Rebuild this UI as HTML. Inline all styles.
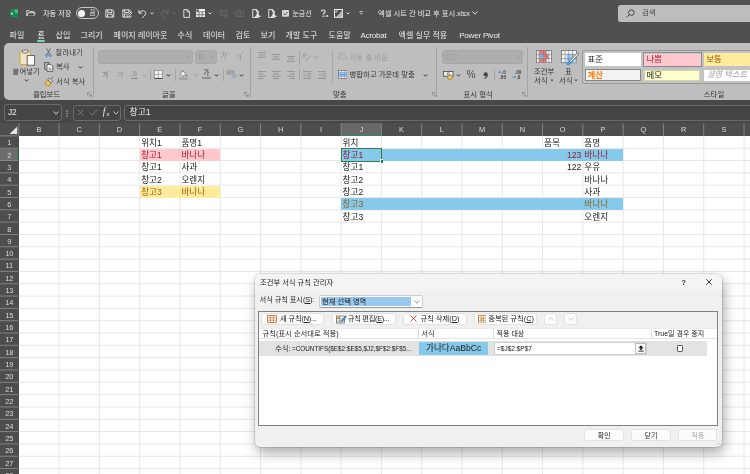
<!DOCTYPE html>
<html lang="ko">
<head>
<meta charset="utf-8">
<title>엑셀 시트 간 비교 후 표시.xlsx</title>
<style>
*{box-sizing:border-box;margin:0;padding:0}
html,body{width:750px;height:474px;overflow:hidden;background:#fff}
body{position:relative;font-family:"Liberation Sans","Noto Sans CJK KR",sans-serif;font-size:7.5px;color:#222;line-height:1}
#wrap{position:absolute;left:0;top:0;width:750px;height:474px;overflow:hidden;will-change:transform}
.abs,.t{position:absolute;white-space:nowrap}
#top{position:absolute;left:0;top:0;width:750px;height:124px;background:#505050}
#ribbon{position:absolute;left:4px;top:43.2px;width:760px;height:56.7px;background:#bebebe;border-radius:5px}
#fbar{position:absolute;left:0;top:100px;width:750px;height:24px;background:#474747}
.tt{color:#ececec;font-size:7.5px}
.tab{color:#ececec;font-size:8px;top:31.7px;margin-left:0.6px}
.rt{color:#363636;font-size:7.4px}
.rd{color:#9c9c9c;font-size:7.4px}
.grp{color:#333;font-size:7.4px;top:90.6px}
.vsep{position:absolute;width:1px;background:#a4a4a4;top:50px;height:44px}
.box{position:absolute;border:1px solid #6a6a6a;border-radius:3px;background:#444}
/* grid */
#grid{position:absolute;left:0;top:123.4px;width:750px;height:351px;background:#fff}
#colh{position:absolute;left:0;top:0;width:750px;height:12.9px;background:#4d4d4d}
#rowh{position:absolute;left:0;top:12.9px;width:19px;height:339px;background:#4d4d4d}
.ch{position:absolute;top:3px;color:#dcdcdc;font-size:7.4px;width:40.25px;text-align:center}
.rh{position:absolute;left:0;width:18.6px;text-align:center;color:#dcdcdc;font-size:7.4px}
.c{position:absolute;font-size:8.6px;color:#1a1a1a;white-space:nowrap}
.fill{position:absolute}
/* dialog */
#dlg{position:absolute;left:255.2px;top:274.0px;width:466.8px;height:172.6px;background:#f0f0f0;border-radius:5px;box-shadow:0 0 0 0.6px rgba(0,0,0,.2),2px 6px 13px rgba(0,0,0,.34)}
.d{position:absolute;display:block;white-space:nowrap;font-size:7.3px;color:#1a1a1a}
.btn{position:absolute;background:#fcfcfc;border:0.8px solid #e2e2e2;border-radius:2.5px;height:12.5px}
</style>
</head>
<body>
<div id="wrap">
<div id="top">
<!-- title bar -->
<svg class="abs" style="left:9px;top:8.8px" width="9.4" height="8.8" viewBox="0 0 12 11.2"><rect x="3" y="0.6" width="8.6" height="10" rx="1" fill="#1f9a58"/><rect x="7.2" y="0.6" width="4.4" height="5" fill="#3bc07c"/><rect x="7.2" y="5.6" width="4.4" height="5" rx="0.8" fill="#168a4c"/><rect x="0.4" y="2.6" width="6.8" height="6.4" rx="0.8" fill="#0f7a40"/><path d="M2.3 4.2 L5.3 7.6 M5.3 4.2 L2.3 7.6" stroke="#fff" stroke-width="1" fill="none"/></svg>
<svg class="abs" style="left:26.4px;top:9.7px" width="10" height="6.8" viewBox="0 0 11 7.6"><path d="M0.8 7 V0.7 H3.6 L4.6 1.8 H8.4 V3 M0.8 7 L2.6 3 H10.2 L8.4 7 Z" fill="none" stroke="#f0f0f0" stroke-width="0.95" stroke-linejoin="round"/></svg>
<span class="t tt" style="left:43px;top:9.5px;font-size:7.2px">자동 저장</span>
<div class="abs" style="left:76.3px;top:7.3px;width:23.2px;height:11.8px;border:0.8px solid #c4c4c4;border-radius:6px"></div>
<div class="abs" style="left:78.2px;top:9.6px;width:7.2px;height:7.2px;border-radius:50%;background:#f8f8f8"></div>
<span class="t tt" style="left:89.6px;top:9.9px;font-size:6.6px">끔</span>
<svg class="abs" style="left:105.4px;top:8.8px" width="9.6" height="9" viewBox="0 0 12 11"><path d="M1 1 H9.3 L11 2.7 V10 H1 Z M3 1 V4.2 H8.6 V1 M3 10 V6.3 H9 V10" fill="none" stroke="#f2f2f2" stroke-width="1.1"/></svg>
<svg class="abs" style="left:121.6px;top:8.8px" width="10.4" height="9" viewBox="0 0 13 11"><path d="M1 1 H9.3 L11 2.7 V5 M11 8.4 V10 H1 V1 M3 1 V4.2 H8.6 V1 M3 10 V6.3 H6.5" fill="none" stroke="#f2f2f2" stroke-width="1.1"/><path d="M6.5 9.5 L7 7.6 L10.8 3.8 L12.2 5.2 L8.4 9 Z" fill="none" stroke="#f2f2f2" stroke-width="0.9"/></svg>
<svg class="abs" style="left:138.4px;top:8.6px" width="9" height="9.6" viewBox="0 0 11 11.6"><path d="M1.2 1.2 V5 H5 M1.6 4.8 C3 2.2 6.2 1.4 8.2 2.8 C10.4 4.6 9.6 7.8 4.8 11" fill="none" stroke="#f2f2f2" stroke-width="1.1"/></svg>
<svg class="abs" style="left:150.2px;top:11.6px" width="4" height="3" viewBox="0 0 4 3"><path d="M0.5 0.5 L2 2 L3.5 0.5" fill="none" stroke="#e0e0e0" stroke-width="0.95"/></svg>
<svg class="abs" style="left:160.4px;top:8.6px" width="9" height="9.6" viewBox="0 0 11 11.6"><path d="M9.8 1.2 V5 H6 M9.4 4.8 C8 2.2 4.8 1.4 2.8 2.8 C0.6 4.6 1.4 7.8 6.2 11" fill="none" stroke="#6e6e6e" stroke-width="1.1"/></svg>
<svg class="abs" style="left:172px;top:11.6px" width="4" height="3" viewBox="0 0 4 3"><path d="M0.5 0.5 L2 2 L3.5 0.5" fill="none" stroke="#6e6e6e" stroke-width="0.95"/></svg>
<svg class="abs" style="left:182.8px;top:8.8px" width="7.4" height="9" viewBox="0 0 9 11"><path d="M1 0.8 H5.4 L8 3.4 V10.2 H1 Z M5.2 0.8 V3.6 H8" fill="none" stroke="#f2f2f2" stroke-width="1.1"/></svg>
<svg class="abs" style="left:195.6px;top:8.9px" width="9.4" height="8.6" viewBox="0 0 9.4 8.6"><rect x="0" y="0" width="9.4" height="8.6" rx="0.6" fill="#f2f2f2"/><path d="M0 2.8 H9.4 M3 2.8 V8.6 M0 5.7 H9.4 M6.2 2.8 V8.6" stroke="#505050" stroke-width="0.7"/><rect x="0.4" y="0.4" width="2.4" height="2" fill="#505050"/></svg>
<svg class="abs" style="left:208.4px;top:11.6px" width="4" height="3" viewBox="0 0 4 3"><path d="M0.5 0.5 L2 2 L3.5 0.5" fill="none" stroke="#e0e0e0" stroke-width="0.95"/></svg>
<svg class="abs" style="left:219.4px;top:8.8px" width="9" height="9" viewBox="0 0 11 11"><path d="M2.6 0.5 V8.4 H10.5 M0.5 2.6 H8.4 V10.5 M8.4 2.6 L10.4 0.6" fill="none" stroke="#6e6e6e" stroke-width="1"/></svg>
<svg class="abs" style="left:235px;top:9.8px" width="9.2" height="7.2" viewBox="0 0 11 8.6"><path d="M0.6 1.8 H3 L3.8 0.6 H7.2 L8 1.8 H10.4 V8 H0.6 Z" fill="none" stroke="#6e6e6e" stroke-width="1"/><circle cx="5.5" cy="4.8" r="1.9" fill="none" stroke="#6e6e6e" stroke-width="1"/></svg>
<svg class="abs" style="left:251.6px;top:8.8px" width="9.4" height="9" viewBox="0 0 10.4 10"><path d="M0.8 0.6 H5 L7 2.6 V9.4 H0.8 Z M4.8 0.6 V2.8 H7" fill="none" stroke="#f2f2f2" stroke-width="1"/><path d="M3.4 9.2 C5.2 7.4 6 5.4 5.6 3.8 C6 6.2 7.4 7.8 9.8 8.2 C7.4 8 5 8.4 3.4 9.2 Z" fill="#f2f2f2" stroke="#f2f2f2" stroke-width="0.7"/></svg>
<svg class="abs" style="left:267.8px;top:8.8px" width="9.4" height="9" viewBox="0 0 10.4 10"><path d="M0.8 0.6 H5 L7 2.6 V9.4 H0.8 Z M4.8 0.6 V2.8 H7" fill="none" stroke="#f2f2f2" stroke-width="1"/><path d="M3.4 9.2 C5.2 7.4 6 5.4 5.6 3.8 C6 6.2 7.4 7.8 9.8 8.2 C7.4 8 5 8.4 3.4 9.2 Z" fill="#f2f2f2" stroke="#f2f2f2" stroke-width="0.7"/></svg>
<svg class="abs" style="left:282.2px;top:10px" width="7" height="6.8" viewBox="0 0 7 6.8"><rect x="0" y="0" width="7" height="6.8" rx="1" fill="#d6d6d6"/><path d="M1.5 3.5 L2.9 4.9 L5.5 1.9" fill="none" stroke="#4a4a4a" stroke-width="1"/></svg>
<span class="t tt" style="left:292.4px;top:9.9px;font-size:7px">눈금선</span>
<svg class="abs" style="left:320.4px;top:8.8px" width="8.6" height="8.6" viewBox="0 0 10 10"><path d="M1.4 3 C1.4 0.4 6 0.4 6 3 C6 4.8 3.7 4.6 3.7 6.4" fill="none" stroke="#f2f2f2" stroke-width="1.2"/><circle cx="3.7" cy="8.4" r="0.85" fill="#f2f2f2"/><path d="M5.4 8.2 H9.4 M8 6.8 L9.4 8.2 L8 9.6" fill="none" stroke="#f2f2f2" stroke-width="0.9"/></svg>
<svg class="abs" style="left:334px;top:8.9px" width="9" height="8.8" viewBox="0 0 9 8.8"><rect x="0.5" y="0.5" width="8" height="7.8" fill="none" stroke="#f2f2f2" stroke-width="1"/><path d="M0.5 3 H3 V0.5" stroke="#f2f2f2" stroke-width="0.7" fill="none"/><path d="M2.2 8.2 L8.4 1.6 V8.2 Z" fill="#dcdcdc"/><path d="M3.6 8.2 L8.4 3.4 M5.4 8.2 L8.4 5.2" stroke="#505050" stroke-width="0.5"/></svg>
<svg class="abs" style="left:346.4px;top:11.6px" width="4" height="3" viewBox="0 0 4 3"><path d="M0.5 0.5 L2 2 L3.5 0.5" fill="none" stroke="#e0e0e0" stroke-width="0.95"/></svg>
<svg class="abs" style="left:358.8px;top:11.2px" width="4.6" height="4" viewBox="0 0 4.6 4"><path d="M0.4 0.5 H4.2 M0.9 1.8 L2.3 3.2 L3.7 1.8" fill="none" stroke="#dcdcdc" stroke-width="0.8"/></svg>
<span class="t tt" style="left:378px;top:9.5px;font-size:7.3px">엑셀 시트 간 비교 후 표시.xlsx</span>
<svg class="abs" style="left:471.5px;top:11.3px" width="6" height="4" viewBox="0 0 6 4"><path d="M0.5 0.5 L3 3.2 L5.5 0.5" fill="none" stroke="#eee" stroke-width="0.9"/></svg>
<div class="abs" style="left:618px;top:5px;width:140px;height:16.5px;background:#bdbdbd;border-radius:2.5px"></div>
<svg class="abs" style="left:625.5px;top:8.5px" width="9" height="9" viewBox="0 0 9 9"><circle cx="5.4" cy="3.6" r="2.8" fill="none" stroke="#3a3a3a" stroke-width="0.9"/><path d="M3.4 5.6 L0.6 8.4" stroke="#3a3a3a" stroke-width="0.9"/></svg>
<span class="t" style="left:642px;top:9.3px;font-size:7.4px;color:#444">검색</span>
<!-- tabs -->
<span class="t tab" style="left:9px">파일</span>
<span class="t tab" style="left:36.8px">홈</span>
<div class="abs" style="left:36.5px;top:40.3px;width:8px;height:1.4px;background:#7fd4a5;border-radius:1px"></div>
<span class="t tab" style="left:55px">삽입</span>
<span class="t tab" style="left:80px">그리기</span>
<span class="t tab" style="left:113px">페이지 레이아웃</span>
<span class="t tab" style="left:177px">수식</span>
<span class="t tab" style="left:202.5px">데이터</span>
<span class="t tab" style="left:235px">검토</span>
<span class="t tab" style="left:260px">보기</span>
<span class="t tab" style="left:285px">개발 도구</span>
<span class="t tab" style="left:328px">도움말</span>
<span class="t tab" style="left:360px;letter-spacing:-0.25px">Acrobat</span>
<span class="t tab" style="left:398px">엑셀 실무 적용</span>
<span class="t tab" style="left:458.6px;letter-spacing:-0.2px">Power Pivot</span>
</div>
<div id="ribbon"></div>
<!-- clipboard group -->
<svg class="abs" style="left:18.5px;top:48.5px" width="17" height="17" viewBox="0 0 17 17"><rect x="1" y="2.6" width="10.5" height="13" rx="1" fill="#efe3c8" stroke="#dfa02c" stroke-width="1"/><rect x="3.6" y="1" width="5.4" height="3" rx="0.8" fill="#e8e8e8" stroke="#555" stroke-width="0.8"/><rect x="8.2" y="6.6" width="7.4" height="9.6" fill="#fbfbfb" stroke="#555" stroke-width="0.9"/></svg>
<span class="t rt" style="left:12.6px;top:68.2px">붙여넣기</span>
<svg class="abs" style="left:24.2px;top:79px" width="5" height="3" viewBox="0 0 5 3"><path d="M0.9 0.5 L2.5 2.2 L4.1 0.5" fill="none" stroke="#333" stroke-width="1"/></svg>
<svg class="abs" style="left:45px;top:48.2px" width="7" height="9" viewBox="0 0 7 9"><path d="M1.6 0.4 L4.6 6 M5.4 0.4 L2.4 6" stroke="#555" stroke-width="0.8" fill="none"/><circle cx="1.8" cy="7.2" r="1.2" fill="none" stroke="#2a7ad1" stroke-width="0.8"/><circle cx="5.2" cy="7.2" r="1.2" fill="none" stroke="#2a7ad1" stroke-width="0.8"/></svg>
<span class="t rt" style="left:55.6px;top:48.6px">잘라내기</span>
<svg class="abs" style="left:44px;top:62.3px" width="10" height="10" viewBox="0 0 10 10"><path d="M2.4 7.4 H0.6 V0.6 H5 V2.2" fill="none" stroke="#444" stroke-width="0.8"/><path d="M3 2.4 H6.8 L8.8 4.4 V9.4 H3 Z" fill="#f4f4f4" stroke="#444" stroke-width="0.8"/><path d="M4.6 6.2 H7.2 M4.6 7.8 H7.2" stroke="#444" stroke-width="0.6"/></svg>
<span class="t rt" style="left:56px;top:63.2px">복사</span>
<svg class="abs" style="left:78px;top:66px" width="5" height="3" viewBox="0 0 5 3"><path d="M0.9 0.5 L2.5 2.2 L4.1 0.5" fill="none" stroke="#333" stroke-width="1"/></svg>
<svg class="abs" style="left:44px;top:76.5px" width="10" height="10" viewBox="0 0 10 10"><path d="M5.2 1.2 L8.8 4.2 L7.4 5.6 L3.8 2.8 Z" fill="#f4f4f4" stroke="#444" stroke-width="0.8"/><path d="M3.6 3.2 L7 6 L4.6 9.2 L0.8 7 Z" fill="#f0c85a" stroke="#a9780f" stroke-width="0.7"/><path d="M7.6 1 L9 0.2" stroke="#444" stroke-width="0.8"/></svg>
<span class="t rt" style="left:56px;top:77.6px">서식 복사</span>
<span class="t grp" style="left:33px">클립보드</span>
<svg class="abs" style="left:87.3px;top:92.2px" width="4.6" height="4.6" viewBox="0 0 4.6 4.6"><path d="M0.3 3.4 V0.3 H3.4 M1.6 1.6 L4.2 4.2 M4.2 2.4 V4.2 H2.4" fill="none" stroke="#6a6a6a" stroke-width="0.6"/></svg>
<div class="vsep" style="left:92.9px;top:46.5px;height:50px"></div>
<!-- font group -->
<div class="abs" style="left:98.3px;top:50px;width:95px;height:13.5px;background:#aeaeae;border:1px solid #a7a7a7;border-radius:3px"></div>
<svg class="abs" style="left:186.2px;top:55.5px" width="5" height="3" viewBox="0 0 5 3"><path d="M0.9 0.5 L2.5 2.2 L4.1 0.5" fill="none" stroke="#939393" stroke-width="0.9"/></svg>
<div class="abs" style="left:195px;top:50px;width:21.5px;height:13.5px;background:#aeaeae;border:1px solid #a7a7a7;border-radius:3px"></div>
<span class="t rd" style="left:197.4px;top:53.2px;font-size:7.8px;color:#969696;letter-spacing:-0.4px">11</span>
<svg class="abs" style="left:210px;top:55.5px" width="5" height="3" viewBox="0 0 5 3"><path d="M0.9 0.5 L2.5 2.2 L4.1 0.5" fill="none" stroke="#939393" stroke-width="0.9"/></svg>
<span class="t rd" style="left:220.6px;top:53.4px;font-size:6.8px;color:#8a8a8a">가</span><span class="t rd" style="left:226.8px;top:52px;font-size:4.4px;color:#8a8a8a">^</span>
<span class="t rd" style="left:236px;top:54px;font-size:6px;color:#8a8a8a">가</span><span class="t rd" style="left:241.6px;top:52px;font-size:5px;color:#8a8a8a">ˇ</span>
<span class="t rd" style="left:102.5px;top:71.6px;font-size:6.4px;font-weight:bold;color:#878787">가</span>
<span class="t rd" style="left:117px;top:71.6px;font-size:6.4px;font-style:italic;color:#878787">가</span>
<span class="t rd" style="left:131.5px;top:71.6px;font-size:6.4px;text-decoration:underline;color:#878787">가</span>
<svg class="abs" style="left:142px;top:74px" width="5" height="3" viewBox="0 0 5 3"><path d="M0.9 0.5 L2.5 2.2 L4.1 0.5" fill="none" stroke="#939393" stroke-width="0.9"/></svg>
<div class="vsep" style="left:150px;top:68.5px;height:12.5px"></div>
<svg class="abs" style="left:154px;top:70.4px" width="9" height="9" viewBox="0 0 9 9"><rect x="0.4" y="0.4" width="8" height="8" fill="#f4f4f4" stroke="#777" stroke-width="0.6"/><path d="M4.4 0.4 V8.4 M0.4 4.4 H8.4" stroke="#888" stroke-width="0.6"/><path d="M0.2 8.4 H8.6" stroke="#333" stroke-width="0.9"/></svg>
<svg class="abs" style="left:166.2px;top:74px" width="5" height="3" viewBox="0 0 5 3"><path d="M0.9 0.5 L2.5 2.2 L4.1 0.5" fill="none" stroke="#333" stroke-width="1"/></svg>
<div class="vsep" style="left:174.5px;top:68.5px;height:12.5px"></div>
<svg class="abs" style="left:179.3px;top:69.6px" width="9" height="10" viewBox="0 0 9 10"><path d="M3.8 0.8 L6.8 3.8 L3.8 6.6 L0.9 3.7 Z" fill="#efefef" stroke="#666" stroke-width="0.7"/><path d="M7.6 4.6 C7 5.6 6.9 6.3 7.6 6.5 C8.3 6.3 8.2 5.6 7.6 4.6" fill="#777" stroke="#777" stroke-width="0.4"/><path d="M3 0.2 V2.4" stroke="#666" stroke-width="0.6"/><rect x="0.1" y="7.6" width="8.8" height="2.2" fill="#a1a1a1"/></svg>
<svg class="abs" style="left:192.7px;top:74px" width="5" height="3" viewBox="0 0 5 3"><path d="M0.9 0.5 L2.5 2.2 L4.1 0.5" fill="none" stroke="#939393" stroke-width="0.9"/></svg>
<span class="t rt" style="left:203.2px;top:70.4px;font-size:6.6px;color:#3a3a3a">가</span>
<div class="abs" style="left:202.2px;top:77.3px;width:8.8px;height:2.1px;background:#8f8f8f"></div>
<svg class="abs" style="left:214.2px;top:74px" width="5" height="3" viewBox="0 0 5 3"><path d="M0.9 0.5 L2.5 2.2 L4.1 0.5" fill="none" stroke="#333" stroke-width="1"/></svg>
<div class="vsep" style="left:222.8px;top:68.5px;height:12.5px"></div>
<span class="t rt" style="left:226.2px;top:70.8px;font-size:4.7px;color:#666">내천</span>
<span class="t rt" style="left:231.6px;top:75.4px;font-size:4.8px;color:#3a86d4;font-style:italic">川</span>
<svg class="abs" style="left:239.2px;top:74px" width="5" height="3" viewBox="0 0 5 3"><path d="M0.9 0.5 L2.5 2.2 L4.1 0.5" fill="none" stroke="#333" stroke-width="1"/></svg>
<span class="t grp" style="left:162px">글꼴</span>
<svg class="abs" style="left:244px;top:92.2px" width="4.6" height="4.6" viewBox="0 0 4.6 4.6"><path d="M0.3 3.4 V0.3 H3.4 M1.6 1.6 L4.2 4.2 M4.2 2.4 V4.2 H2.4" fill="none" stroke="#6a6a6a" stroke-width="0.6"/></svg>
<div class="vsep" style="left:250px;top:46.5px;height:50px"></div>
<!-- alignment group -->
<svg class="abs" style="left:257.8px;top:52px" width="8.4" height="5.8" viewBox="0 0 8.4 5.8"><rect x="0.0" y="0.2" width="8.4" height="0.85" fill="#8c8c8c"/><rect x="1.4" y="2.5" width="5.6" height="0.85" fill="#8c8c8c"/><rect x="0.0" y="4.8" width="8.4" height="0.85" fill="#8c8c8c"/></svg><svg class="abs" style="left:272.3px;top:54px" width="8.4" height="5.8" viewBox="0 0 8.4 5.8"><rect x="0.0" y="0.2" width="8.4" height="0.85" fill="#8c8c8c"/><rect x="1.4" y="2.5" width="5.6" height="0.85" fill="#8c8c8c"/><rect x="0.0" y="4.8" width="8.4" height="0.85" fill="#8c8c8c"/></svg><svg class="abs" style="left:287px;top:56px" width="8.4" height="5.8" viewBox="0 0 8.4 5.8"><rect x="0.0" y="0.2" width="8.4" height="0.85" fill="#8c8c8c"/><rect x="1.4" y="2.5" width="5.6" height="0.85" fill="#8c8c8c"/><rect x="0.0" y="4.8" width="8.4" height="0.85" fill="#8c8c8c"/></svg>
<div class="vsep" style="left:299.3px;top:51px;height:12.5px"></div>
<svg class="abs" style="left:302.4px;top:51.6px" width="10" height="10" viewBox="0 0 10 10"><text x="0.6" y="4.2" font-size="4.6" fill="#8a8a8a" transform="rotate(-40 3 4)" font-family="Liberation Sans, sans-serif">ab</text><path d="M3.2 9.4 L8.8 3.6" stroke="#8e8e8e" stroke-width="0.7" fill="none"/></svg>
<svg class="abs" style="left:314.2px;top:55.8px" width="5" height="3" viewBox="0 0 5 3"><path d="M0.9 0.5 L2.5 2.2 L4.1 0.5" fill="none" stroke="#939393" stroke-width="0.9"/></svg>
<svg class="abs" style="left:257.8px;top:70.8px" width="8.4" height="8.1" viewBox="0 0 8.4 8.1"><rect x="0.0" y="0.2" width="8.4" height="0.85" fill="#8c8c8c"/><rect x="0.0" y="2.5" width="5.4" height="0.85" fill="#8c8c8c"/><rect x="0.0" y="4.8" width="8.4" height="0.85" fill="#8c8c8c"/><rect x="0.0" y="7.1" width="5.4" height="0.85" fill="#8c8c8c"/></svg><svg class="abs" style="left:272.3px;top:70.8px" width="8.4" height="8.1" viewBox="0 0 8.4 8.1"><rect x="0.0" y="0.2" width="8.4" height="0.85" fill="#8c8c8c"/><rect x="1.5" y="2.5" width="5.4" height="0.85" fill="#8c8c8c"/><rect x="0.0" y="4.8" width="8.4" height="0.85" fill="#8c8c8c"/><rect x="1.5" y="7.1" width="5.4" height="0.85" fill="#8c8c8c"/></svg><svg class="abs" style="left:287px;top:70.8px" width="8.4" height="8.1" viewBox="0 0 8.4 8.1"><rect x="0.0" y="0.2" width="8.4" height="0.85" fill="#8c8c8c"/><rect x="3.0" y="2.5" width="5.4" height="0.85" fill="#8c8c8c"/><rect x="0.0" y="4.8" width="8.4" height="0.85" fill="#8c8c8c"/><rect x="3.0" y="7.1" width="5.4" height="0.85" fill="#8c8c8c"/></svg>
<div class="vsep" style="left:299.3px;top:68.5px;height:12.5px"></div>
<svg class="abs" style="left:303.2px;top:70.8px" width="8.4" height="8.4" viewBox="0 0 8.4 8.4"><path d="M0 0.6 H8.2 M4.4 2.9 H8.2 M4.4 5.2 H8.2 M0 7.5 H8.2" stroke="#8c8c8c" stroke-width="0.85"/><path d="M3.2 4 H0.6 M1.6 3 L0.6 4 L1.6 5" fill="none" stroke="#8c8c8c" stroke-width="0.6"/></svg>
<svg class="abs" style="left:317.8px;top:70.8px" width="8.4" height="8.4" viewBox="0 0 8.4 8.4"><path d="M0 0.6 H8.2 M4.4 2.9 H8.2 M4.4 5.2 H8.2 M0 7.5 H8.2" stroke="#8c8c8c" stroke-width="0.85"/><path d="M0.4 4 H3 M2 3 L3 4 L2 5" fill="none" stroke="#8c8c8c" stroke-width="0.6"/></svg>
<div class="vsep" style="left:331.9px;top:50px;height:34px;background:#a8a8a8"></div>
<svg class="abs" style="left:337.8px;top:52.4px" width="9.4" height="9.4" viewBox="0 0 9.4 9.4"><text x="0" y="3.8" font-size="4" fill="#999" font-family="Liberation Sans, Noto Sans CJK KR, sans-serif">가나</text><text x="0" y="8.2" font-size="4" fill="#999" font-family="Liberation Sans, Noto Sans CJK KR, sans-serif">다</text><path d="M8.6 4.6 V7 H5.2 M6.4 5.8 L5.2 7 L6.4 8.2" stroke="#999" stroke-width="0.6" fill="none"/></svg>
<span class="t rd" style="left:349.8px;top:53.9px;color:#9d9d9d">자동 줄 바꿈</span>
<svg class="abs" style="left:338px;top:70.3px" width="9.4" height="9" viewBox="0 0 9.4 9"><rect x="0.4" y="0.4" width="8.6" height="8.2" fill="#f4f4f4" stroke="#555" stroke-width="0.6"/><rect x="0.4" y="2.9" width="8.6" height="3.2" fill="#b9d6f2" stroke="#2a6fbd" stroke-width="0.6"/><path d="M3.3 0.4 V2.9 M6.2 0.4 V2.9 M3.3 6.1 V8.6 M6.2 6.1 V8.6" stroke="#666" stroke-width="0.5"/><path d="M2 4.5 H7.4 M3 3.8 L2 4.5 L3 5.2 M6.4 3.8 L7.4 4.5 L6.4 5.2" stroke="#2a6fbd" stroke-width="0.5" fill="none"/></svg>
<span class="t rt" style="left:349.5px;top:71px">병합하고 가운데 맞춤</span>
<svg class="abs" style="left:423.2px;top:74px" width="5" height="3" viewBox="0 0 5 3"><path d="M0.9 0.5 L2.5 2.2 L4.1 0.5" fill="none" stroke="#333" stroke-width="1"/></svg>
<span class="t grp" style="left:333px">맞춤</span>
<svg class="abs" style="left:432.3px;top:92.2px" width="4.6" height="4.6" viewBox="0 0 4.6 4.6"><path d="M0.3 3.4 V0.3 H3.4 M1.6 1.6 L4.2 4.2 M4.2 2.4 V4.2 H2.4" fill="none" stroke="#6a6a6a" stroke-width="0.6"/></svg>
<div class="vsep" style="left:436.4px;top:46.5px;height:50px"></div>
<!-- number group -->
<div class="abs" style="left:441.5px;top:50px;width:81.5px;height:13.5px;background:#aeaeae;border:1px solid #a7a7a7;border-radius:3px"></div>
<span class="t rd" style="left:444.2px;top:53.4px;color:#a0a0a0">일반</span>
<svg class="abs" style="left:516.2px;top:55.5px" width="5" height="3" viewBox="0 0 5 3"><path d="M0.9 0.5 L2.5 2.2 L4.1 0.5" fill="none" stroke="#939393" stroke-width="0.9"/></svg>
<svg class="abs" style="left:443.3px;top:70px" width="11" height="10" viewBox="0 0 11 10"><rect x="0.5" y="1.4" width="9.6" height="4.8" fill="#efefef" stroke="#444" stroke-width="0.8"/><circle cx="5.3" cy="3.8" r="1.2" fill="none" stroke="#444" stroke-width="0.6"/><ellipse cx="7" cy="6" rx="2.2" ry="1" fill="#f0c85a" stroke="#8a6410" stroke-width="0.6"/><path d="M4.8 6 V8.4 C4.8 9.6 9.2 9.6 9.2 8.4 V6" fill="#f0c85a" stroke="#8a6410" stroke-width="0.6"/></svg>
<svg class="abs" style="left:456.2px;top:74px" width="5" height="3" viewBox="0 0 5 3"><path d="M0.9 0.5 L2.5 2.2 L4.1 0.5" fill="none" stroke="#333" stroke-width="1"/></svg>
<span class="t rt" style="left:466.6px;top:70.2px;font-size:10.2px;color:#4a4a4a">%</span>
<svg class="abs" style="left:483.4px;top:71.6px" width="5" height="7.4" viewBox="0 0 5 7.4"><path d="M2.6 0.2 C4 0.2 4.8 1.2 4.8 2.8 C4.8 5 3.4 6.6 1 7.2 L0.8 6.6 C2.2 6 3 5 3 4.2 C1.8 4.6 0.6 3.8 0.6 2.4 C0.6 1.2 1.4 0.2 2.6 0.2 Z" fill="#444"/></svg>
<div class="vsep" style="left:493.8px;top:68.5px;height:12.5px"></div>
<svg class="abs" style="left:497.5px;top:70px" width="9" height="10" viewBox="0 0 9 10"><path d="M3.6 2.2 H0.6 M1.8 1 L0.6 2.2 L1.8 3.4" stroke="#2a7ad1" stroke-width="0.7" fill="none"/><text x="4" y="4" font-size="4.6" fill="#3a3a3a" font-weight="bold" font-family="Liberation Sans, sans-serif">.0</text><text x="1.6" y="9" font-size="4.6" fill="#3a3a3a" font-weight="bold" font-family="Liberation Sans, sans-serif">.00</text></svg>
<svg class="abs" style="left:512px;top:70px" width="10" height="10" viewBox="0 0 10 10"><text x="3" y="4" font-size="4.6" fill="#3a3a3a" font-weight="bold" font-family="Liberation Sans, sans-serif">.00</text><path d="M0.4 7 H3.6 M2.4 5.8 L3.6 7 L2.4 8.2" stroke="#2a7ad1" stroke-width="0.7" fill="none"/><text x="4.6" y="9" font-size="4.6" fill="#3a3a3a" font-weight="bold" font-family="Liberation Sans, sans-serif">.0</text></svg>
<span class="t grp" style="left:463.5px">표시 형식</span>
<svg class="abs" style="left:521.8px;top:92.2px" width="4.6" height="4.6" viewBox="0 0 4.6 4.6"><path d="M0.3 3.4 V0.3 H3.4 M1.6 1.6 L4.2 4.2 M4.2 2.4 V4.2 H2.4" fill="none" stroke="#6a6a6a" stroke-width="0.6"/></svg>
<div class="vsep" style="left:527.3px;top:46.5px;height:50px"></div>
<!-- styles group -->
<svg class="abs" style="left:536px;top:49.8px" width="16" height="13.2" viewBox="0 0 16 13.2"><rect x="0.4" y="0.4" width="15.2" height="12.4" fill="#f6f6f6" stroke="#666" stroke-width="0.7"/><rect x="3.2" y="0.8" width="7" height="3.6" fill="#e8747c"/><rect x="3.2" y="8.8" width="7" height="3.6" fill="#e8747c"/><rect x="3.2" y="4.8" width="4.2" height="3.6" fill="#6fb5ef"/><rect x="7.8" y="4.8" width="4.6" height="3.6" fill="#e8747c"/><path d="M3 0.4 V12.8 M7.6 0.4 V12.8 M10.4 0.4 V12.8 M12.8 0.4 V12.8 M0.4 4.6 H15.6 M0.4 8.6 H15.6" stroke="#666" stroke-width="0.5"/></svg>
<span class="t rt" style="left:534px;top:67.8px">조건부</span>
<span class="t rt" style="left:534px;top:76.6px">서식</span>
<svg class="abs" style="left:549.6px;top:79.2px" width="4" height="3" viewBox="0 0 4 3"><path d="M0.3 0.4 H3.7 L2 2.6 Z" fill="#555"/></svg>
<svg class="abs" style="left:560.6px;top:49.8px" width="18" height="16" viewBox="0 0 18 16"><rect x="0.4" y="0.4" width="15.2" height="12.4" fill="#f6f6f6" stroke="#666" stroke-width="0.7"/><rect x="5.4" y="4.4" width="10" height="8.2" fill="#9fd0f7"/><path d="M4 0.4 V12.8 M7.8 0.4 V12.8 M11.6 0.4 V12.8 M0.4 4.4 H15.6 M0.4 8.6 H15.6" stroke="#666" stroke-width="0.5"/><path d="M16.6 4 L8.6 12.6" stroke="#555" stroke-width="2.4" stroke-linecap="round"/><path d="M16.6 4 L8.8 12.4" stroke="#f2f2f2" stroke-width="1.3" stroke-linecap="round"/><path d="M8.8 11.4 C7.4 11.6 6.6 13 5 13.4 C5 14.8 7 15.2 8.4 14.6 C9.8 14 10.4 13 10 12.4 Z" fill="#4aa3ee" stroke="#2a6fbd" stroke-width="0.4"/></svg>
<span class="t rt" style="left:565px;top:67.8px">표</span>
<span class="t rt" style="left:559px;top:76.6px">서식</span>
<svg class="abs" style="left:574.4px;top:79.2px" width="4" height="3" viewBox="0 0 4 3"><path d="M0.3 0.4 H3.7 L2 2.6 Z" fill="#555"/></svg>
<div class="abs" style="left:582.4px;top:50.4px;width:180px;height:33.9px;border:0.9px solid #999;border-radius:2px;background:#c3c3c3"></div>
<div class="abs" style="left:585.3px;top:53.4px;width:55.5px;height:12.7px;background:#fff"></div>
<span class="t" style="left:587.6px;top:55.2px;font-size:8.4px;color:#222">표준</span>
<div class="abs" style="left:642.6px;top:52.1px;width:59.8px;height:15.3px;border:0.9px solid #8a8a8a;background:#c9c9c9"></div>
<div class="abs" style="left:644.2px;top:53.6px;width:56.6px;height:12.3px;background:#ffc7ce"></div>
<span class="t" style="left:646.6px;top:55.2px;font-size:8.4px;color:#b5203a">나쁨</span>
<div class="abs" style="left:704px;top:53.4px;width:56.6px;height:12.7px;background:#ffeb9c"></div>
<span class="t" style="left:706.2px;top:55.2px;font-size:8.4px;color:#9c5700">보통</span>
<div class="abs" style="left:585.3px;top:69.2px;width:55.5px;height:12.2px;background:#f2f2f2;border:0.8px solid #858585"></div>
<span class="t" style="left:587.6px;top:70.8px;font-size:8.4px;font-weight:bold;color:#fa7d00">계산</span>
<div class="abs" style="left:644.4px;top:69.6px;width:55.6px;height:11.5px;background:#ffffcc;border:0.6px solid #d4d4b0"></div>
<span class="t" style="left:646.6px;top:70.8px;font-size:8.4px;color:#222">메모</span>
<div class="abs" style="left:704px;top:69.6px;width:56.6px;height:11.7px;background:#fff"></div>
<span class="t" style="left:707px;top:71px;font-size:8.2px;font-style:italic;color:#a2a2a2">설명 텍스트</span>
<span class="t grp" style="left:703.8px">스타일</span>

<div id="fbar"></div>
<div class="box" style="left:4px;top:104.4px;width:57.8px;height:16.2px"></div>
<span class="t" style="left:8px;top:108.4px;font-size:8.4px;color:#ededed;letter-spacing:-0.3px">J2</span>
<svg class="abs" style="left:53px;top:111px" width="6" height="4" viewBox="0 0 6 4"><path d="M0.5 0.5 L3 3.2 L5.5 0.5" fill="none" stroke="#e4e4e4" stroke-width="0.9"/></svg>
<svg class="abs" style="left:66px;top:109.5px" width="2" height="7" viewBox="0 0 2 7"><circle cx="1" cy="1" r="0.7" fill="#cfcfcf"/><circle cx="1" cy="3.5" r="0.7" fill="#cfcfcf"/><circle cx="1" cy="6" r="0.7" fill="#cfcfcf"/></svg>
<div class="box" style="left:73px;top:104.5px;width:47.6px;height:16px"></div>
<svg class="abs" style="left:76.5px;top:109.4px" width="7" height="7" viewBox="0 0 7 7"><path d="M0.5 0.5 L6.5 6.5 M6.5 0.5 L0.5 6.5" stroke="#8a8a8a" stroke-width="0.8"/></svg>
<svg class="abs" style="left:88.8px;top:109.4px" width="9" height="7" viewBox="0 0 9 7"><path d="M0.5 3.6 L3.2 6.3 L8.5 0.6" fill="none" stroke="#8a8a8a" stroke-width="0.8"/></svg>
<span class="t" style="left:102.8px;top:107.6px;font-size:9.4px;font-style:italic;color:#f2f2f2;font-family:'Liberation Serif',serif">f</span><span class="t" style="left:106.4px;top:110.6px;font-size:6.6px;font-style:italic;color:#f2f2f2;font-family:'Liberation Serif',serif">x</span>
<svg class="abs" style="left:113px;top:111px" width="6" height="4" viewBox="0 0 6 4"><path d="M0.5 0.5 L3 3.2 L5.5 0.5" fill="none" stroke="#dcdcdc" stroke-width="0.8"/></svg>
<div class="box" style="left:123.5px;top:104.5px;width:640px;height:16px"></div>
<span class="t" style="left:129.6px;top:108px;font-size:8.8px;color:#f2f2f2">창고1</span>

<div id="grid">
<svg class="abs" style="left:0;top:0" width="750" height="352" viewBox="0 0 750 352"><path d="M59.09 12.9 V352 M99.38 12.9 V352 M139.67 12.9 V352 M179.96 12.9 V352 M220.25 12.9 V352 M260.54 12.9 V352 M300.83 12.9 V352 M341.12 12.9 V352 M381.41 12.9 V352 M421.70 12.9 V352 M461.99 12.9 V352 M502.28 12.9 V352 M542.57 12.9 V352 M582.86 12.9 V352 M623.15 12.9 V352 M663.44 12.9 V352 M703.73 12.9 V352 M744.02 12.9 V352 M784.31 12.9 V352 M18.8 25.22 H750 M18.8 37.54 H750 M18.8 49.86 H750 M18.8 62.18 H750 M18.8 74.50 H750 M18.8 86.82 H750 M18.8 99.14 H750 M18.8 111.46 H750 M18.8 123.78 H750 M18.8 136.10 H750 M18.8 148.42 H750 M18.8 160.74 H750 M18.8 173.06 H750 M18.8 185.38 H750 M18.8 197.70 H750 M18.8 210.02 H750 M18.8 222.34 H750 M18.8 234.66 H750 M18.8 246.98 H750 M18.8 259.30 H750 M18.8 271.62 H750 M18.8 283.94 H750 M18.8 296.26 H750 M18.8 308.58 H750 M18.8 320.90 H750 M18.8 333.22 H750 M18.8 345.54 H750 M18.8 357.86 H750 " stroke="#e3e3e3" stroke-width="0.85" fill="none"/></svg>
<div class="fill" style="left:139.67px;top:25.22px;width:80.58px;height:12.32px;background:#ffc7ce"></div>
<div class="fill" style="left:139.67px;top:62.18px;width:80.58px;height:12.32px;background:#ffeb9c"></div>
<div class="fill" style="left:341.12px;top:25.22px;width:282.03px;height:12.32px;background:#86c9ea"></div>
<div class="fill" style="left:341.12px;top:74.50px;width:282.03px;height:12.32px;background:#86c9ea"></div>
<div id="colh"></div>
<div id="rowh"></div>
<div class="fill" style="left:341.12px;top:0;width:40.29px;height:12.9px;background:#686868;border-bottom:1.3px solid #2f8a57"></div>
<div class="fill" style="left:0;top:25.22px;width:18.40px;height:12.32px;background:#6c6c6c;border-right:1.2px solid #2f8a57"></div>
<svg class="abs" style="left:0;top:0" width="750" height="352" viewBox="0 0 750 352"><path d="M18.80 0.6 V12.7 M59.09 0.6 V12.7 M99.38 0.6 V12.7 M139.67 0.6 V12.7 M179.96 0.6 V12.7 M220.25 0.6 V12.7 M260.54 0.6 V12.7 M300.83 0.6 V12.7 M341.12 0.6 V12.7 M381.41 0.6 V12.7 M421.70 0.6 V12.7 M461.99 0.6 V12.7 M502.28 0.6 V12.7 M542.57 0.6 V12.7 M582.86 0.6 V12.7 M623.15 0.6 V12.7 M663.44 0.6 V12.7 M703.73 0.6 V12.7 M744.02 0.6 V12.7 M784.31 0.6 V12.7 M0 12.90 H18.3 M0 25.22 H18.3 M0 37.54 H18.3 M0 49.86 H18.3 M0 62.18 H18.3 M0 74.50 H18.3 M0 86.82 H18.3 M0 99.14 H18.3 M0 111.46 H18.3 M0 123.78 H18.3 M0 136.10 H18.3 M0 148.42 H18.3 M0 160.74 H18.3 M0 173.06 H18.3 M0 185.38 H18.3 M0 197.70 H18.3 M0 210.02 H18.3 M0 222.34 H18.3 M0 234.66 H18.3 M0 246.98 H18.3 M0 259.30 H18.3 M0 271.62 H18.3 M0 283.94 H18.3 M0 296.26 H18.3 M0 308.58 H18.3 M0 320.90 H18.3 M0 333.22 H18.3 M0 345.54 H18.3 M0 357.86 H18.3 " stroke="#8a8a8a" stroke-width="0.9" fill="none"/><path d="M17.2 3.4 V11 H9.6 Z" fill="#e8e8e8"/></svg>
<span class="ch" style="left:18.80px">B</span><span class="ch" style="left:59.09px">C</span><span class="ch" style="left:99.38px">D</span><span class="ch" style="left:139.67px">E</span><span class="ch" style="left:179.96px">F</span><span class="ch" style="left:220.25px">G</span><span class="ch" style="left:260.54px">H</span><span class="ch" style="left:300.83px">I</span><span class="ch" style="left:341.12px">J</span><span class="ch" style="left:381.41px">K</span><span class="ch" style="left:421.70px">L</span><span class="ch" style="left:461.99px">M</span><span class="ch" style="left:502.28px">N</span><span class="ch" style="left:542.57px">O</span><span class="ch" style="left:582.86px">P</span><span class="ch" style="left:623.15px">Q</span><span class="ch" style="left:663.44px">R</span><span class="ch" style="left:703.73px">S</span><span class="ch" style="left:744.02px">T</span>
<span class="rh" style="top:15.90px">1</span><span class="rh" style="top:28.22px">2</span><span class="rh" style="top:40.54px">3</span><span class="rh" style="top:52.86px">4</span><span class="rh" style="top:65.18px">5</span><span class="rh" style="top:77.50px">6</span><span class="rh" style="top:89.82px">7</span><span class="rh" style="top:102.14px">8</span><span class="rh" style="top:114.46px">9</span><span class="rh" style="top:126.78px">10</span><span class="rh" style="top:139.10px">11</span><span class="rh" style="top:151.42px">12</span><span class="rh" style="top:163.74px">13</span><span class="rh" style="top:176.06px">14</span><span class="rh" style="top:188.38px">15</span><span class="rh" style="top:200.70px">16</span><span class="rh" style="top:213.02px">17</span><span class="rh" style="top:225.34px">18</span><span class="rh" style="top:237.66px">19</span><span class="rh" style="top:249.98px">20</span><span class="rh" style="top:262.30px">21</span><span class="rh" style="top:274.62px">22</span><span class="rh" style="top:286.94px">23</span><span class="rh" style="top:299.26px">24</span><span class="rh" style="top:311.58px">25</span><span class="rh" style="top:323.90px">26</span><span class="rh" style="top:336.22px">27</span><span class="rh" style="top:348.54px">28</span>
<span class="c" style="left:141.17px;top:15.20px;color:#1a1a1a">위치1</span>
<span class="c" style="left:181.46px;top:15.20px;color:#1a1a1a">품명1</span>
<span class="c" style="left:342.62px;top:15.20px;color:#1a1a1a">위치</span>
<span class="c" style="left:544.07px;top:15.20px;color:#1a1a1a">품목</span>
<span class="c" style="left:584.36px;top:15.20px;color:#1a1a1a">품명</span>
<span class="c" style="left:141.17px;top:27.52px;color:#ad1a2c">창고1</span>
<span class="c" style="left:181.46px;top:27.52px;color:#ad1a2c">바나나</span>
<span class="c" style="left:342.62px;top:27.52px;color:#8e1a30">창고1</span>
<span class="c" style="left:584.36px;top:27.52px;color:#8e1a30">바나나</span>
<span class="c" style="left:141.17px;top:39.84px;color:#1a1a1a">창고1</span>
<span class="c" style="left:181.46px;top:39.84px;color:#1a1a1a">사과</span>
<span class="c" style="left:342.62px;top:39.84px;color:#1a1a1a">창고1</span>
<span class="c" style="left:584.36px;top:39.84px;color:#1a1a1a">우유</span>
<span class="c" style="left:141.17px;top:52.16px;color:#1a1a1a">창고2</span>
<span class="c" style="left:181.46px;top:52.16px;color:#1a1a1a">오렌지</span>
<span class="c" style="left:342.62px;top:52.16px;color:#1a1a1a">창고2</span>
<span class="c" style="left:584.36px;top:52.16px;color:#1a1a1a">바나나</span>
<span class="c" style="left:141.17px;top:64.48px;color:#a4620c">창고3</span>
<span class="c" style="left:181.46px;top:64.48px;color:#a4620c">바나나</span>
<span class="c" style="left:342.62px;top:64.48px;color:#1a1a1a">창고2</span>
<span class="c" style="left:584.36px;top:64.48px;color:#1a1a1a">사과</span>
<span class="c" style="left:342.62px;top:76.80px;color:#8a6526">창고3</span>
<span class="c" style="left:584.36px;top:76.80px;color:#8a6526">바나나</span>
<span class="c" style="left:342.62px;top:89.12px;color:#1a1a1a">창고3</span>
<span class="c" style="left:584.36px;top:89.12px;color:#1a1a1a">오렌지</span>
<span class="c" style="right:168.74px;top:27.52px;color:#8e1a30">123</span>
<span class="c" style="right:168.74px;top:39.84px;color:#1a1a1a">122</span>
<div class="abs" style="left:340.52px;top:24.62px;width:41.49px;height:13.52px;border:1.2px solid #2e7d4f"></div>
<div class="abs" style="left:379.61px;top:35.74px;width:3.6px;height:3.6px;background:#2e7d4f;border-left:0.6px solid #fff;border-top:0.6px solid #fff"></div>
</div>
<div id="dlg">
<div class="abs" style="left:0;top:0;width:100%;height:17px;background:#f4f5f2;border-radius:5px 5px 0 0"></div>
<span class="d" style="left:4.8px;top:5.0px">조건부 서식 규칙 관리자</span>
<span class="d" style="left:426.3px;top:4.8px;font-size:7.2px;font-weight:bold;color:#333">?</span>
<svg class="abs" style="left:450.8px;top:5.0px" width="6" height="6" viewBox="0 0 6 6"><path d="M0.3 0.3 L5.7 5.7 M5.7 0.3 L0.3 5.7" stroke="#222" stroke-width="0.9"/></svg>
<span class="d" style="left:4.4px;top:22.4px;letter-spacing:-0.12px">서식 규칙 표시(<u>S</u>):</span>
<div class="abs" style="left:64.2px;top:21.2px;width:103.2px;height:12.8px;background:#fff;border:0.8px solid #cdcdcd;border-bottom-color:#9a9a9a;border-radius:2px"></div>
<div class="abs" style="left:66.0px;top:23.2px;width:89.8px;height:9.2px;background:#9ac9ef"></div>
<span class="d" style="left:66.8px;top:24.0px">현재 선택 영역</span>
<svg class="abs" style="left:158.8px;top:26.0px" width="6" height="4" viewBox="0 0 6 4"><path d="M0.5 0.5 L3 3.2 L5.5 0.5" fill="none" stroke="#666" stroke-width="0.7"/></svg>
<div class="abs" style="left:3.1px;top:36.7px;width:460px;height:115.1px;background:#fff;border:1px solid #808080"></div>
<div class="abs" style="left:4.1px;top:37.7px;width:458px;height:16px;background:#f0f0f0"></div>
<div class="btn" style="left:5.8px;top:38.7px;width:63.0px;height:12.3px"></div>
<div class="btn" style="left:76.5px;top:38.7px;width:64.0px;height:12.3px"></div>
<div class="btn" style="left:147.5px;top:38.7px;width:64.0px;height:12.3px"></div>
<div class="btn" style="left:218.8px;top:38.7px;width:63.3px;height:12.3px"></div>
<div class="btn" style="left:288.8px;top:38.7px;width:13.3px;height:12.3px"></div>
<div class="btn" style="left:309.1px;top:38.7px;width:13.0px;height:12.3px"></div>
<svg class="abs" style="left:12.3px;top:41.0px" width="10" height="8" viewBox="0 0 10 8"><rect x="0.4" y="0.4" width="9" height="7" fill="#fff" stroke="#c55a11" stroke-width="0.7"/><path d="M0.4 2.8 H9.4 M0.4 5.2 H9.4 M3.4 0.4 V7.4 M6.4 0.4 V7.4" stroke="#c55a11" stroke-width="0.6"/></svg>
<span class="d" style="left:24.8px;top:41.2px;letter-spacing:-0.18px">새 규칙(<u>N</u>)...</span>
<svg class="abs" style="left:81.3px;top:40.6px" width="11" height="9" viewBox="0 0 11 9"><rect x="0.4" y="1" width="8" height="7" fill="#fff" stroke="#555" stroke-width="0.7"/><rect x="0.8" y="1.4" width="3" height="2.4" fill="#f0b24a"/><path d="M0.4 3.8 H8.4 M0.4 6 H8.4 M3.6 1 V8" stroke="#555" stroke-width="0.5"/><path d="M9.8 0.6 L5.4 5.4 L5 6.8 L6.4 6.4 L10.6 1.6 Z" fill="#4a90d9" stroke="#245a96" stroke-width="0.5"/></svg>
<span class="d" style="left:92.6px;top:41.2px;letter-spacing:-0.33px">규칙 편집(<u>E</u>)...</span>
<svg class="abs" style="left:155.3px;top:41.4px" width="7" height="7" viewBox="0 0 7 7"><path d="M0.5 0.5 L6.5 6.5 M6.5 0.5 L0.5 6.5" stroke="#e0352b" stroke-width="0.9"/></svg>
<span class="d" style="left:165.2px;top:41.2px">규칙 삭제(<u>D</u>)</span>
<svg class="abs" style="left:222.6px;top:40.9px" width="8.6" height="8.4" viewBox="0 0 8.6 8.4"><rect x="0.4" y="0.4" width="7.8" height="7.6" fill="#fff" stroke="#b5651d" stroke-width="0.7"/><rect x="3" y="3" width="2.6" height="2.4" fill="#f6c879"/><path d="M0.4 3 H8.2 M0.4 5.4 H8.2 M3 0.4 V8 M5.6 0.4 V8" stroke="#b5651d" stroke-width="0.5"/></svg>
<span class="d" style="left:233.0px;top:41.2px">중복된 규칙(<u>C</u>)</span>
<svg class="abs" style="left:292.6px;top:43.0px" width="6" height="4" viewBox="0 0 6 4"><path d="M0.5 3.4 L3 0.7 L5.5 3.4" fill="none" stroke="#b5b5b5" stroke-width="0.7"/></svg>
<svg class="abs" style="left:312.8px;top:43.0px" width="6" height="4" viewBox="0 0 6 4"><path d="M0.5 0.6 L3 3.3 L5.5 0.6" fill="none" stroke="#b5b5b5" stroke-width="0.7"/></svg>
<div class="abs" style="left:4.1px;top:54.0px;width:458px;height:10.6px;border-top:1px solid #ececec;border-bottom:1px solid #e4e4e4;background:#fff"></div>
<div class="abs" style="left:163.1px;top:54.5px;width:0.8px;height:10px;background:#dedede"></div>
<div class="abs" style="left:238.1px;top:54.5px;width:0.8px;height:10px;background:#dedede"></div>
<div class="abs" style="left:395.5px;top:54.5px;width:0.8px;height:10px;background:#dedede"></div>
<span class="d" style="left:7.4px;top:55.8px;font-size:7.3px">규칙(표시 순서대로 적용)</span>
<span class="d" style="left:166.4px;top:55.8px;font-size:7px">서식</span>
<span class="d" style="left:241.4px;top:55.8px;font-size:7px">적용 대상</span>
<span class="d" style="left:398.8px;top:55.8px;font-size:7px">True일 경우 중지</span>
<div class="abs" style="left:4.1px;top:66.7px;width:448px;height:15.3px;background:#e3e3e3"></div>
<span class="d" style="left:19.8px;top:71.2px;font-size:7.3px">수식: <span style="display:inline-block;font-size:7.4px;transform:scaleX(0.86);transform-origin:0 50%">=COUNTIFS($E$2:$E$5,$J2,$F$2:$F$5...</span></span>
<div class="abs" style="left:163.8px;top:68.3px;width:69.3px;height:12.4px;background:#86c9ea"></div>
<span class="d" style="left:163.8px;top:70.0px;width:69.3px;text-align:center;font-size:8.6px;color:#222">가나다AaBbCc</span>
<div class="abs" style="left:239.1px;top:68.2px;width:152.4px;height:12.8px;background:#fff;border:0.8px solid #cfcfcf"></div>
<span class="d" style="left:241.6px;top:71.0px;font-size:7.4px;transform:scaleX(0.88);transform-origin:0 50%">=$J$2:$P$7</span>
<div class="abs" style="left:379.8px;top:68.8px;width:11.2px;height:11.6px;background:#fff;border:0.8px solid #bdbdbd"></div>
<svg class="abs" style="left:382.4px;top:71.2px" width="6" height="7" viewBox="0 0 6 7"><path d="M3 0.3 L5.6 3.2 H3.8 V5 H2.2 V3.2 H0.4 Z" fill="#222"/><rect x="0.4" y="5.6" width="5.2" height="1" fill="#222"/></svg>
<div class="abs" style="left:421.4px;top:71.0px;width:6.8px;height:6.6px;background:#fff;border:0.8px solid #555;border-radius:1.2px"></div>
<div class="btn" style="left:329.2px;top:155.2px;width:39.6px;height:12.1px"></div><span class="d" style="left:329.2px;top:157.8px;width:39.6px;text-align:center;font-size:7px;color:#1a1a1a">확인</span>
<div class="btn" style="left:375.8px;top:155.2px;width:39.8px;height:12.1px"></div><span class="d" style="left:375.8px;top:157.8px;width:39.8px;text-align:center;font-size:7px;color:#1a1a1a">닫기</span>
<div class="btn" style="left:422.8px;top:155.2px;width:39.4px;height:12.1px"></div><span class="d" style="left:422.8px;top:157.8px;width:39.4px;text-align:center;font-size:7px;color:#a8a8a8">적용</span>
<svg class="abs" style="left:460.0px;top:166.0px" width="6" height="6" viewBox="0 0 6 6"><path d="M5.5 0.5 L0.5 5.5 M5.5 2.8 L2.8 5.5" stroke="#bdbdbd" stroke-width="0.6"/></svg>
</div>
</div>
</body>
</html>
